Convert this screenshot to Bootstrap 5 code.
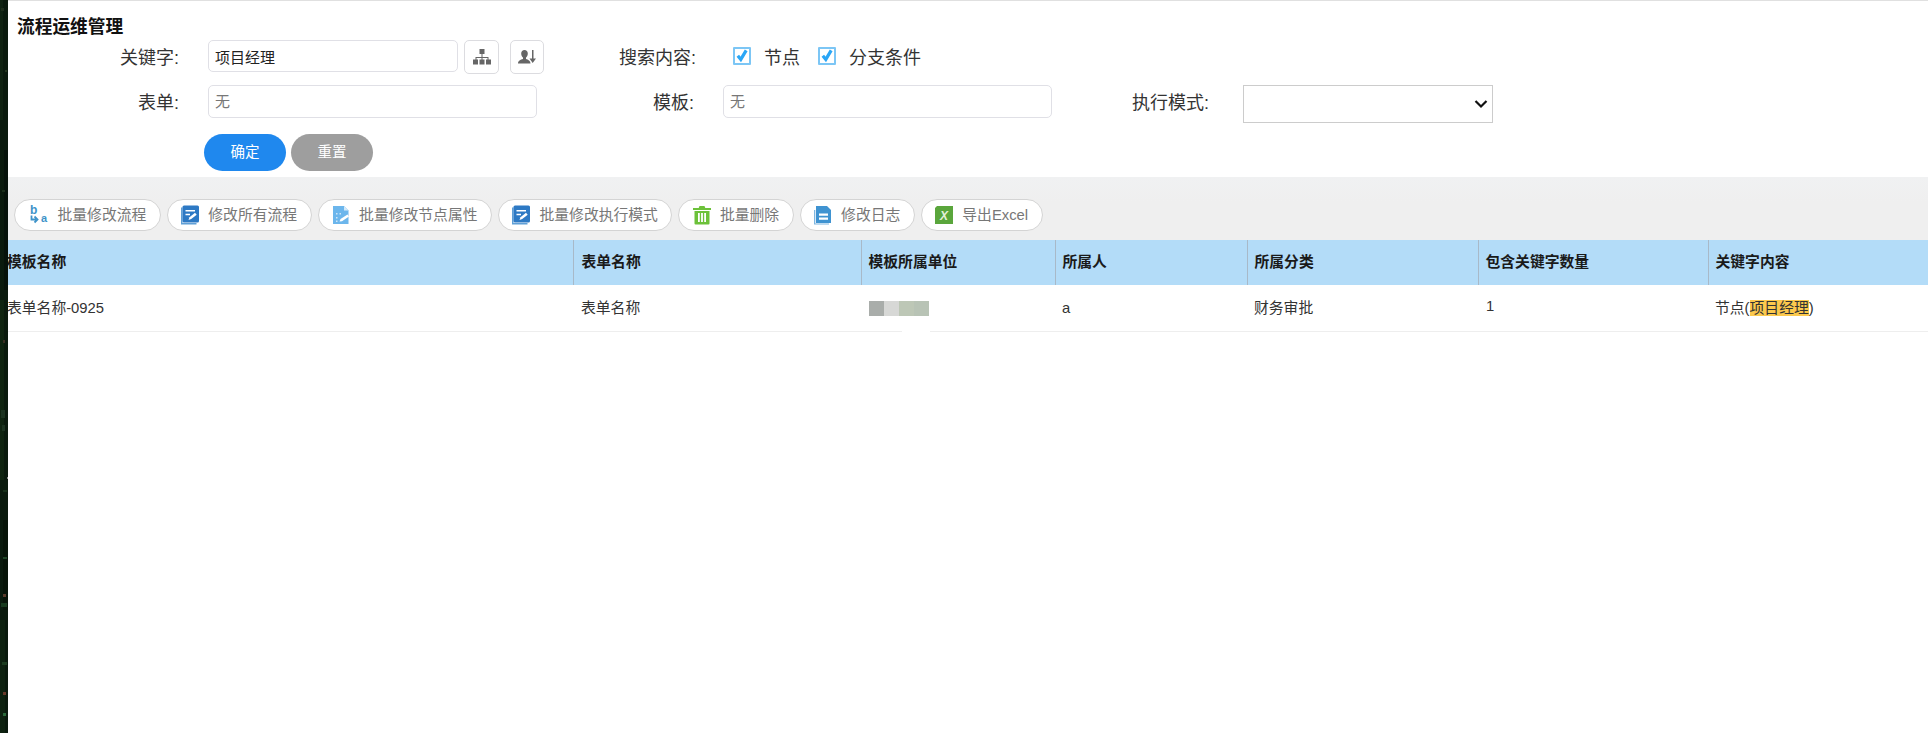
<!DOCTYPE html>
<html lang="zh-CN">
<head>
<meta charset="UTF-8">
<title>流程运维管理</title>
<link href="https://cdn.jsdelivr.net/npm/bootstrap@5.3.2/dist/css/bootstrap.min.css" rel="stylesheet">
<style>
html, body { height: 100%; }
body { font-family: "Liberation Sans", "Noto Sans CJK SC", sans-serif; color: #333; background: #fff; overflow: hidden; }
.desk-strip { width: 8px; flex: none; background: #0a1a0d; }
.desk-strip svg { display: block; }
.app-main { flex: 1 1 auto; min-width: 0; overflow: hidden; background: #fff; }

.search-box { height: 177px; border-top: 1px solid #e0e0e0; padding-top: 16px; }
.page-title { font-size: 17.7px; font-weight: 700; line-height: 20px; margin: 0 0 3px 9px; color: #111; }
.fld-label { font-size: 18px; line-height: 22px; text-align: right; color: #333; flex: none; margin: 7px 0 0; }
.lb-key { width: 171px; margin-right: 29px; }
.lb-content { width: 152px; margin-right: 37px; }
.lb-tpl { width: 157px; margin-right: 29px; }
.lb-mode { width: 157px; margin-right: 34px; }
.fld-input.form-control { font-size: 15px; height: 33px; min-height: 0; padding: 0 6px; border: 1px solid #e0e0e6; border-radius: 5px; color: #222; box-shadow: none; }
.fld-key.form-control { width: 250px; height: 32px; }
.fld-wide.form-control { width: 329px; color: #666; height: 33px; }
.fld-wide.form-control::placeholder { color: #777; opacity: 1; }
.fld-mode.form-select { width: 250px; height: 38px; border-radius: 0; border-color: #ccc; padding: 0; background-image: url("data:image/svg+xml,%3Csvg xmlns='http://www.w3.org/2000/svg' viewBox='0 0 14 10'%3E%3Cpath d='M1.500 2l5.500 5.500L12.500 2' fill='none' stroke='%23111' stroke-width='2.200'/%3E%3C/svg%3E"); background-position: right 4px center; background-size: 14px 10px; }
.row-one { height: 35px; }
.row-two { height: 38px; margin-top: 10px; }
.tool-sq { width: 35px; height: 34px; padding: 0; border: 1px solid #dcdce0; border-radius: 5px; background: #fff; margin-left: 6px; display: flex; align-items: center; justify-content: center; }
.tool-sq + .tool-sq { width: 34px; margin-left: 11px; }
.tick-wrap { margin-top: 7px; }
.tick-box.form-check-input { width: 18px; height: 18px; margin: 0 13px 0 0; border: 2px solid #7cc6f5; border-radius: 1px; background-color: #fff; background-size: 14px 14px; float: none; box-shadow: none; opacity: 1; flex: none; }
.tick-box.form-check-input:checked { background-color: #fff; border-color: #7cc6f5; background-image: url("data:image/svg+xml,%3Csvg xmlns='http://www.w3.org/2000/svg' viewBox='0 0 14 14'%3E%3Cpath d='M2.800 6.800l3 3.600 5.400-9' fill='none' stroke='%232aa6f6' stroke-width='3.200'/%3E%3C/svg%3E"); }
.tick-text { font-size: 18px; line-height: 22px; color: #333; margin-right: 18px; }
.row-acts { margin-top: 11px; padding-left: 196px; gap: 5px; }
.act-btn.btn { width: 82px; height: 37px; padding: 0; font-size: 14.5px; color: #fff; border: 0; border-radius: 19px; }
.act-ok.btn { background: #1f88ee; }
.act-reset.btn { background: #9e9e9e; }

.tool-bar { height: 63px; background: linear-gradient(#f0f1f2, #efefef 40%); padding: 22px 0 0 6px; gap: 6px; }
.tool-pill.btn { height: 32px; padding: 0 13.5px 0 12.5px; background: #fff; border: 1px solid #d4d4d4; border-radius: 16px; color: #777; font-size: 14.8px; line-height: 30px; gap: 8px; white-space: nowrap; --bs-btn-hover-bg: #fff; }
.tool-pill svg { flex: none; }

.flow-table.table { table-layout: fixed; width: 1921px; margin: 0 0 0 -1px; border-collapse: collapse; }
.flow-table col.c1 { width: 566px; }
.flow-table col.c2 { width: 288px; }
.flow-table col.c3 { width: 194px; }
.flow-table col.c4 { width: 192px; }
.flow-table col.c5 { width: 231px; }
.flow-table col.c6 { width: 230px; }
.flow-table col.c7 { width: 220px; }
.flow-table th { background: #b3dcf8; height: 45px; padding: 0 0 0 7px; font-size: 14.8px; font-weight: 700; color: #1a1a1a; border: 0; border-left: 1px solid #a8b9c8; vertical-align: middle; box-shadow: none; }
.flow-table td { background: #fff; height: 46px; padding: 0 0 0 7px; font-size: 14.8px; color: #333; border: 0; border-bottom: 1px solid #eeeeee; vertical-align: middle; box-shadow: none; position: relative; }
.flow-table th:first-child, .flow-table td:first-child { border-left: 0; padding-left: 0; }
.flow-table th:nth-child(2), .flow-table td:nth-child(2) { padding-left: 8px; }
.flow-table td.td-num { padding-bottom: 4px; padding-left: 8px; }
.blur-name { display: flex; width: 60px; height: 15px; margin: 1px 0 0 1px; }
.blur-name i { flex: 1 1 0; }
.bn-a { background: #a9adaa; }
.bn-b { background: #d7d8d6; }
.bn-c { background: #bdc7b6; }
.bn-d { background: #b8c3b5; }
.blur-gap { position: absolute; left: 41px; bottom: -1px; width: 28px; height: 3px; background: #fff; }
.kw-hit { background: #fcc94d; }
</style>
</head>
<body>
<svg width="0" height="0" class="position-absolute">
  <symbol id="ic-book" viewBox="0 0 20 20">
    <path d="M1 2.500v17h15.500v-1.500H2.500V2.500z" fill="#5f9fd6"/>
    <rect x="2.500" y="0.500" width="16.500" height="17" rx="1.500" fill="#2d79c4"/>
    <path d="M5.500 5h9.500v1.400H5.500zM5.500 8.800h4.500v1.400H5.500z" fill="#fff"/>
    <path d="M8.500 15l1-2.800 5.500-4.400 1.700 1.900-5.500 4.400z" fill="#fff"/>
  </symbol>
</svg>
<div class="d-flex h-100">
  <div class="desk-strip">
    <svg width="8" height="733">
      <rect x="0" y="0" width="3" height="120" fill="#0f2211"/>
      <rect x="4" y="150" width="4" height="140" fill="#06120a"/>
      <rect x="0" y="300" width="4" height="180" fill="#0f2410"/>
      <rect x="3" y="520" width="5" height="90" fill="#071408"/>
      <rect x="0" y="620" width="5" height="113" fill="#0e2210"/>
      <rect x="1" y="8" width="3" height="3" fill="#1d2d1b"/>
      <rect x="5" y="70" width="2" height="2" fill="#24361f"/>
      <rect x="2" y="190" width="3" height="2" fill="#1a2e1a"/>
      <rect x="3" y="340" width="2" height="3" fill="#3a2f22"/>
      <rect x="1" y="410" width="4" height="8" fill="#1c3320"/>
      <rect x="2" y="425" width="3" height="6" fill="#1c3320"/>
      <rect x="3" y="490" width="4" height="2" fill="#173019"/>
      <rect x="7" y="477" width="1" height="2" fill="#8a8a8a"/>
      <rect x="3" y="557" width="4" height="2" fill="#1f4526"/>
      <rect x="3" y="594" width="3" height="3" fill="#5a3a2a"/>
      <rect x="1" y="603" width="6" height="4" fill="#173a1d"/>
      <rect x="2" y="662" width="5" height="3" fill="#1c3d20"/>
      <rect x="3" y="692" width="3" height="3" fill="#6a3a2a"/>
      <rect x="3" y="713" width="3" height="3" fill="#2a6a3a"/>
    </svg>
  </div>
  <div class="app-main">
    <div class="search-box">
      <h1 class="page-title">流程运维管理</h1>
      <div class="d-flex align-items-start row-one">
        <label class="fld-label lb-key" for="kw">关键字:</label>
        <input id="kw" class="form-control fld-input fld-key" type="text" value="项目经理">
        <button class="tool-sq" type="button" aria-label="组织">
          <svg width="18" height="16" viewBox="0 0 18 16"><path d="M6.500 0h5v5h-5zM0 10.500h5v5H0zM6.500 10.500h5v5h-5zM13 10.500h5v5h-5zM8.500 5h1v3h6v2.500h-1V9h-5v1.500h-1V9h-5v1.500h-1V8h6z" fill="#666"/></svg>
        </button>
        <button class="tool-sq" type="button" aria-label="人员">
          <svg width="18" height="14" viewBox="0 0 18 14"><path d="M3.200 3.500C3.200 1.500 4.600 0 6.500 0s3.300 1.500 3.300 3.500-1 3.400-1.800 4v1.500c2 .5 4.500 1.700 4.500 4.500H0c0-2.800 2.500-4 5-4.500V7.500c-.8-.6-1.800-2-1.800-4z" fill="#666"/><path d="M14 0h1.500v8.500H18L14.700 13l-3.200-4.500H14z" fill="#666"/></svg>
        </button>
        <label class="fld-label lb-content">搜索内容:</label>
        <div class="d-flex align-items-start tick-wrap">
          <input class="form-check-input tick-box" type="checkbox" checked id="cb1">
          <label class="tick-text" for="cb1">节点</label>
          <input class="form-check-input tick-box" type="checkbox" checked id="cb2">
          <label class="tick-text" for="cb2">分支条件</label>
        </div>
      </div>
      <div class="d-flex align-items-start row-two">
        <label class="fld-label lb-key" for="fm">表单:</label>
        <input id="fm" class="form-control fld-input fld-wide" type="text" placeholder="无">
        <label class="fld-label lb-tpl" for="tp">模板:</label>
        <input id="tp" class="form-control fld-input fld-wide" type="text" placeholder="无">
        <label class="fld-label lb-mode" for="md">执行模式:</label>
        <select id="md" class="form-select fld-mode"><option></option></select>
      </div>
      <div class="d-flex row-acts">
        <button class="btn act-btn act-ok" type="button">确定</button>
        <button class="btn act-btn act-reset" type="button">重置</button>
      </div>
    </div>

    <div class="d-flex tool-bar">
      <button class="btn d-flex align-items-center tool-pill" type="button">
        <svg width="22" height="22" viewBox="-1 -1 22 22"><text x="1" y="9" font-family="Liberation Sans" font-size="12" font-weight="700" fill="#3e93c9">b</text><text x="12" y="16.500" font-family="Liberation Sans" font-size="11" font-weight="700" fill="#3e93c9">a</text><path d="M2.500 10.500v4H7M5.500 11.500l3 3-3 3" fill="none" stroke="#3e93c9" stroke-width="1.800"/></svg>
        <span class="pill-text-a">批量修改流程</span>
      </button>
      <button class="btn d-flex align-items-center tool-pill" type="button">
        <svg width="20" height="20"><use href="#ic-book"/></svg>
        修改所有流程
      </button>
      <button class="btn d-flex align-items-center tool-pill" type="button">
        <svg width="20" height="20" viewBox="0 0 20 20"><path d="M2 1h11l4.500 4.500V19H2z" fill="#6cb6ec"/><path d="M13 1v4.500h4.500z" fill="#d3e9f9"/><path d="M5 8h1.500v1.500H5zM8.500 8H10v1.500H8.500zM5 12h1.500v1.500H5zM5 15.500h1.500V17H5z" fill="#cfe6f8"/><path d="M8.500 16.500l1-2.500 7-4.500 1.500 2-7 4.800z" fill="#fff"/></svg>
        批量修改节点属性
      </button>
      <button class="btn d-flex align-items-center tool-pill" type="button">
        <svg width="20" height="20"><use href="#ic-book"/></svg>
        批量修改执行模式
      </button>
      <button class="btn d-flex align-items-center tool-pill" type="button">
        <svg width="20" height="20" viewBox="0 0 20 20"><path d="M7.500 1h5l.8 2H19v2H1V3h5.700z" fill="#6cc13a"/><path d="M2.500 6h15v12.500a1 1 0 0 1-1 1h-13a1 1 0 0 1-1-1z" fill="#6cc13a"/><path d="M6 8h1.800v9H6zM9.100 8h1.800v9H9.100zM12.200 8H14v9h-1.800z" fill="#fff"/></svg>
        批量删除
      </button>
      <button class="btn d-flex align-items-center tool-pill" type="button">
        <svg width="20" height="20" viewBox="0 0 20 20"><path d="M1 5v14.500h15v-1H2.300V5z" fill="#7fb6e0"/><path d="M3 1h11l4 4v13H3z" fill="#3f93d1"/><path d="M6 8.500h9v2.200H6zM6 12.500h9v2.200H6z" fill="#fff"/></svg>
        修改日志
      </button>
      <button class="btn d-flex align-items-center tool-pill" type="button">
        <svg width="20" height="20" viewBox="0 0 20 20"><path d="M3 1h16v18H1V3z" fill="#5aa63c"/><text x="10" y="15" text-anchor="middle" font-family="Liberation Sans" font-size="12" font-weight="700" font-style="italic" fill="#e4f1dc">X</text></svg>
        导出Excel
      </button>
    </div>

    <table class="table flow-table">
      <colgroup><col class="c1"><col class="c2"><col class="c3"><col class="c4"><col class="c5"><col class="c6"><col class="c7"></colgroup>
      <thead>
        <tr><th>模板名称</th><th>表单名称</th><th>模板所属单位</th><th>所属人</th><th>所属分类</th><th>包含关键字数量</th><th>关键字内容</th></tr>
      </thead>
      <tbody>
        <tr>
          <td>表单名称-0925</td>
          <td>表单名称</td>
          <td><div class="blur-name"><i class="bn-a"></i><i class="bn-b"></i><i class="bn-c"></i><i class="bn-d"></i></div><span class="blur-gap"></span></td>
          <td>a</td>
          <td>财务审批</td>
          <td class="td-num">1</td>
          <td>节点(<span class="kw-hit">项目经理</span>)</td>
        </tr>
      </tbody>
    </table>
  </div>
</div>
<script src="https://cdn.jsdelivr.net/npm/bootstrap@5.3.2/dist/js/bootstrap.bundle.min.js"></script>
</body>
</html>
